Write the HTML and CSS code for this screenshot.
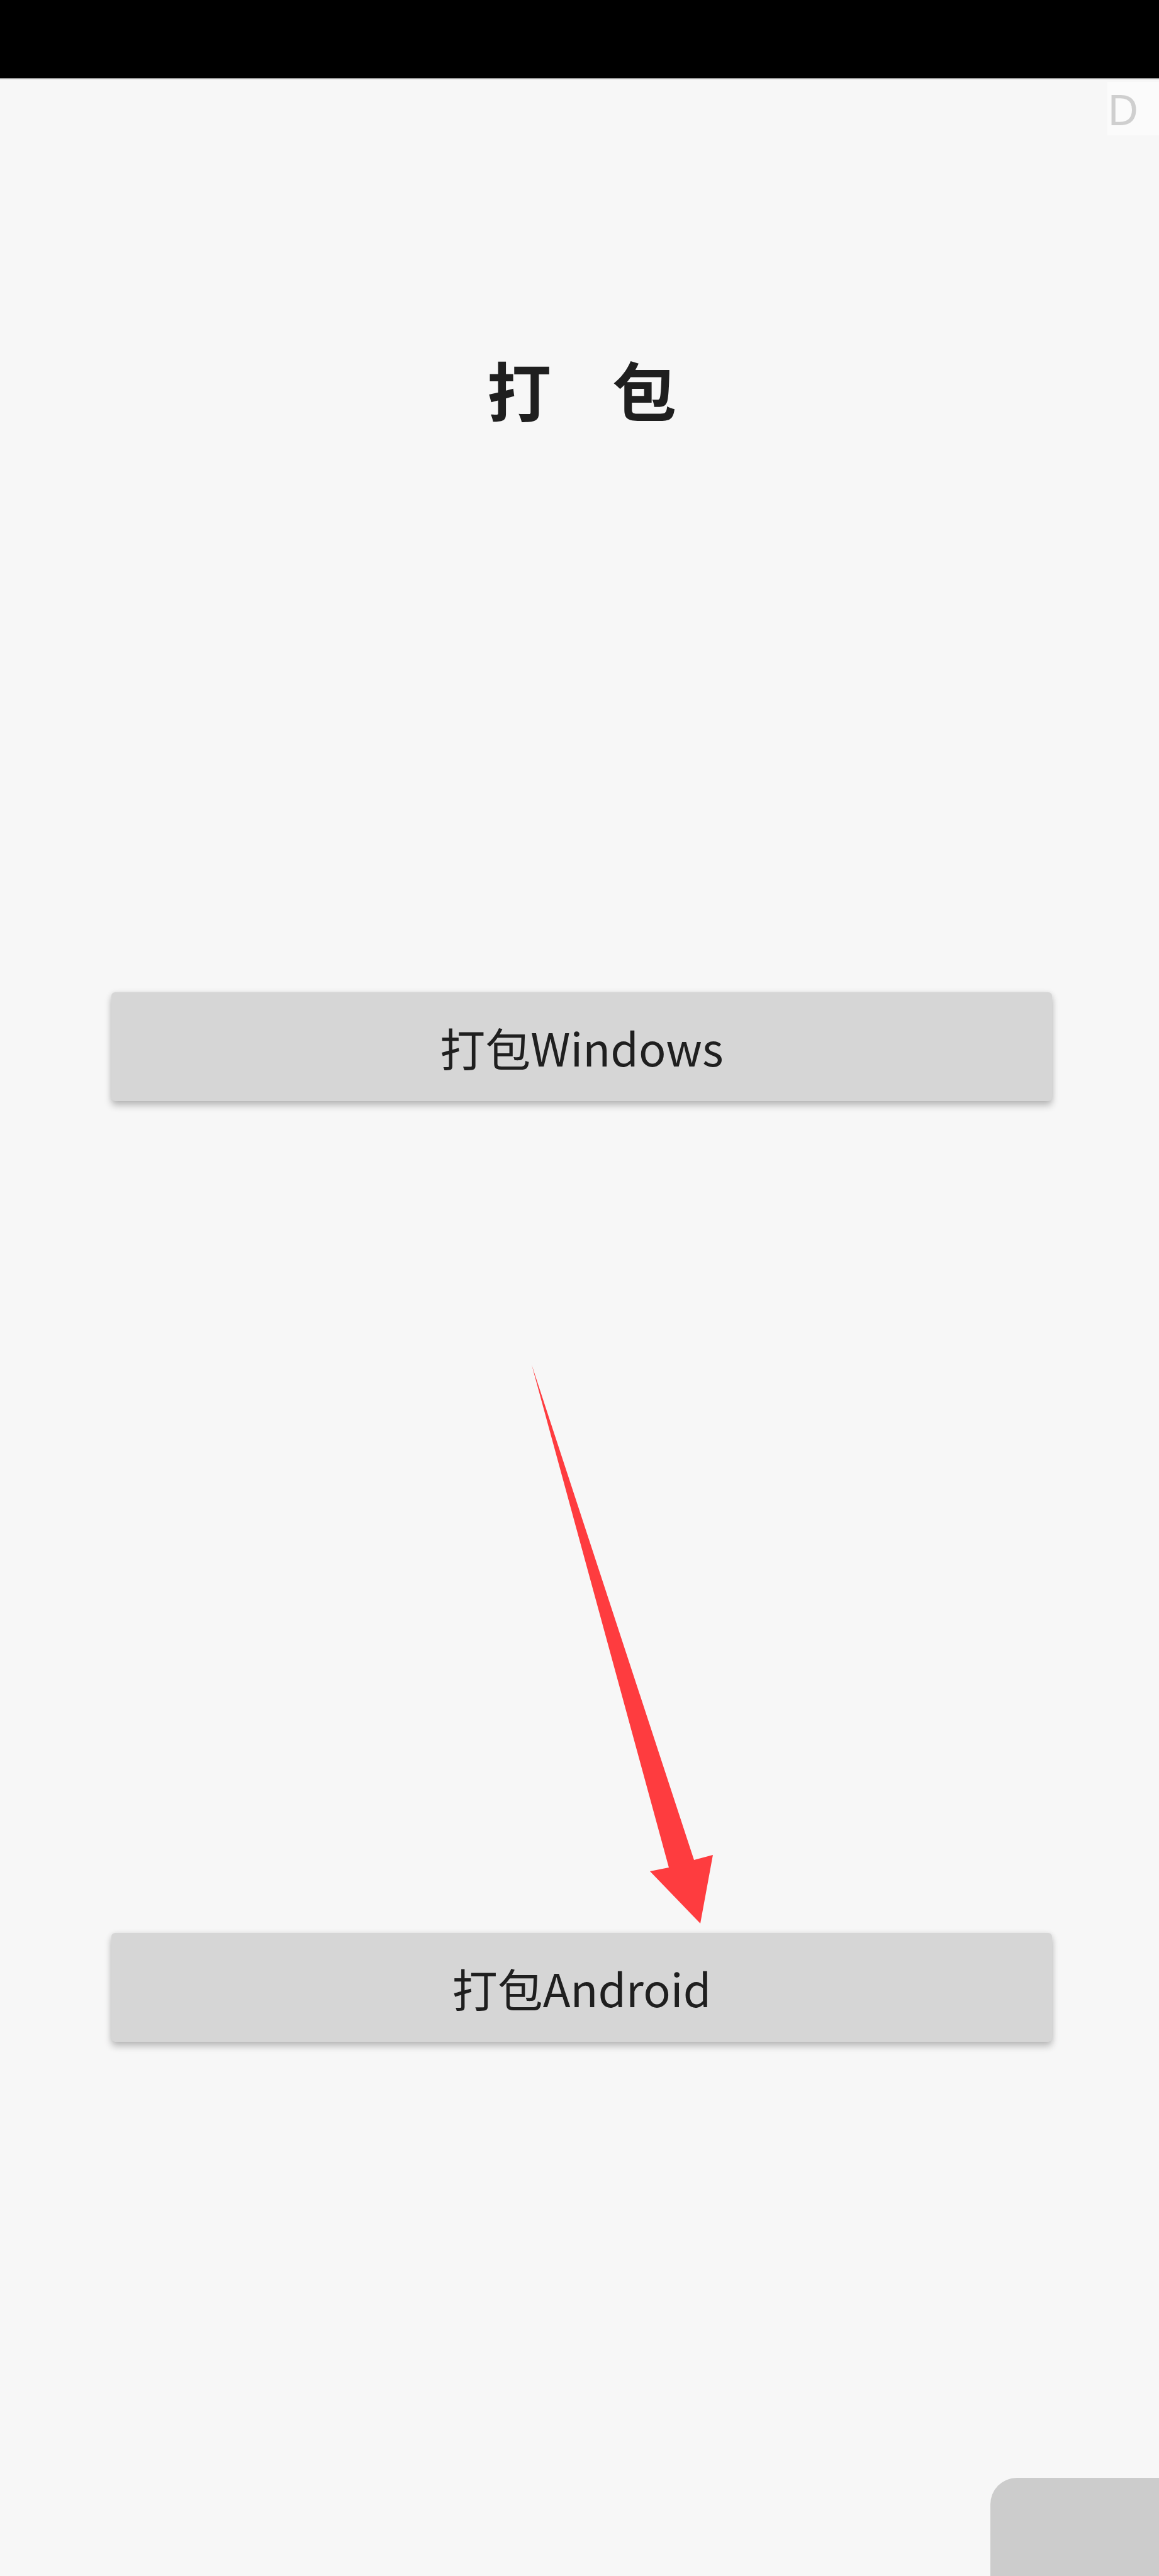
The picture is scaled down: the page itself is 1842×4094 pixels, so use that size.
FILE: index.html
```html
<!DOCTYPE html>
<html lang="zh">
<head>
<meta charset="utf-8">
<title>打包</title>
<link rel="stylesheet" href="styles.css">
</head>
<body>
<div class="statusbar"></div>
<main class="page">
  <h1 class="title"><span>打</span><span>包</span></h1>
  <button class="btn btn-windows">打包Windows</button>
  <button class="btn btn-android">打包Android</button>
</main>
<div class="debug-label">D</div>
<svg class="arrow" width="1842" height="4094" viewBox="0 0 1842 4094" xmlns="http://www.w3.org/2000/svg">
  <polygon points="845,2169 1103,2956 1133,2948 1113,3057 1033,2974 1063,2968" fill="#fe3c3f"/>
</svg>
<div class="float-pill"></div>
</body>
</html>
```

FILE: styles.css
```css
html, body {
  margin: 0;
  padding: 0;
}
body {
  width: 1842px;
  height: 4094px;
  background: #f7f7f7;
  font-family: "Noto Sans CJK SC", "Noto Sans", sans-serif;
  color: #222;
  position: relative;
  overflow: hidden;
}
.statusbar {
  height: 124px;
  background: #000;
  border-bottom: 2px solid #9a9a9a;
}
.page {
  display: flex;
  flex-direction: column;
  align-items: stretch;
  padding: 0 170px 0 177px;
}
.title {
  margin: 441px 0 0 0;
  display: flex;
  justify-content: center;
  gap: 97px;
  font-size: 102px;
  line-height: 1;
  font-weight: 700;
  color: #1f1f1f;
}
.btn {
  display: block;
  height: 173px;
  border: none;
  border-radius: 6px;
  background: #d6d6d6;
  font-family: "Noto Sans CJK SC", "Noto Sans", sans-serif;
  font-size: 72px;
  font-weight: 400;
  color: #1f1f1f;
  box-shadow: 0 7px 12px rgba(0,0,0,0.24), 0 0 8px rgba(0,0,0,0.08);
  padding: 0;
}
.btn-windows {
  margin-top: 908px;
}
.btn-android {
  margin-top: 1322px;
}
.debug-label {
  position: absolute;
  top: 130px;
  right: 0;
  width: 82px;
  height: 85px;
  background: #fbfbfb;
  color: #cfcfcf;
  font-family: "Noto Sans", sans-serif;
  font-size: 68px;
  line-height: 85px;
  padding-left: 0;
  box-sizing: border-box;
}
.arrow {
  position: absolute;
  left: 0;
  top: 0;
  pointer-events: none;
}
.float-pill {
  position: absolute;
  left: 1574px;
  top: 3938px;
  width: 320px;
  height: 240px;
  border-radius: 42px;
  background: #cccccc;
}
```
